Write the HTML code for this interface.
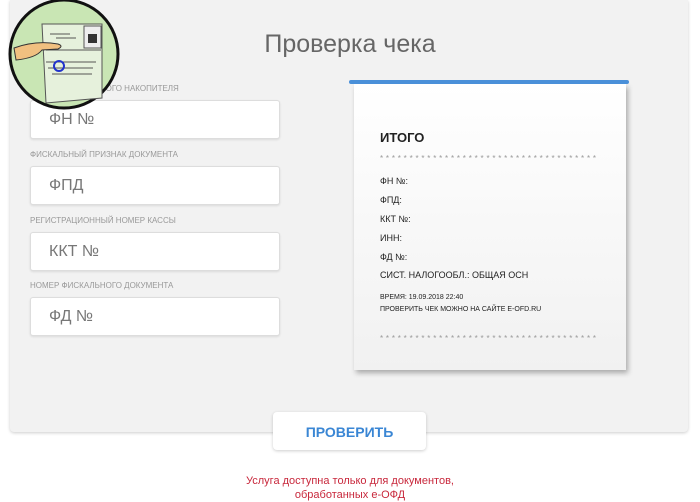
<!DOCTYPE html><html><head><meta charset="utf-8"><style>
body{margin:0;width:700px;height:500px;background:#fff;font-family:"Liberation Sans",sans-serif;position:relative;overflow:hidden}
.panel{position:absolute;left:10px;top:0;width:678px;height:432px;background:#f2f2f2;border-radius:0 0 4px 4px;box-shadow:0 1px 3px rgba(0,0,0,.2)}
h1{position:absolute;left:0;width:700px;top:30px;margin:0;text-align:center;font-weight:normal;font-size:25px;color:#666}
.lab{position:absolute;left:30px;font-size:8px;color:#999}
.inp{position:absolute;left:30px;width:248px;height:37px;background:#fff;border:1px solid #ddd;border-radius:3px;box-shadow:0 1px 2px rgba(0,0,0,.1);font-size:16px;color:#777;line-height:37px;text-indent:18px}
.rc{position:absolute;left:354px;top:84px;width:272px;height:286px;background:linear-gradient(#fff,#f1f1f1);box-shadow:2px 3px 5px rgba(0,0,0,.3)}
.bar{position:absolute;left:349px;top:80px;width:280px;height:4px;background:#4a90d9;border-radius:2px}
.rc div{position:absolute;left:26px;font-size:9px;color:#222}
.st{font-size:8px!important;color:#999!important;letter-spacing:2.8px}
.btn{position:absolute;left:273px;top:412px;width:153px;height:38px;background:#fff;border-radius:4px;box-shadow:0 1px 3px rgba(0,0,0,.2);text-align:center;line-height:40px;color:#3a86d4;font-weight:bold;font-size:14px}
.red{position:absolute;left:0;width:700px;top:474px;text-align:center;color:#c8283c;font-size:11px;line-height:14px}
</style></head><body>
<div class="panel"></div>
<h1>Проверка чека</h1>
<div class="lab" style="top:84px">НОМЕР ФИСКАЛЬНОГО НАКОПИТЕЛЯ</div>
<div class="inp" style="top:100px">ФН №</div>
<div class="lab" style="top:150px">ФИСКАЛЬНЫЙ ПРИЗНАК ДОКУМЕНТА</div>
<div class="inp" style="top:166px">ФПД</div>
<div class="lab" style="top:216px">РЕГИСТРАЦИОННЫЙ НОМЕР КАССЫ</div>
<div class="inp" style="top:232px">ККТ №</div>
<div class="lab" style="top:281px">НОМЕР ФИСКАЛЬНОГО ДОКУМЕНТА</div>
<div class="inp" style="top:297px">ФД №</div>
<div class="rc">
<div style="top:46px;font-size:13px;font-weight:bold">ИТОГО</div>
<div class="st" style="top:70px">*************************************</div>
<div style="top:92px">ФН №:</div>
<div style="top:111px">ФПД:</div>
<div style="top:130px">ККТ №:</div>
<div style="top:149px">ИНН:</div>
<div style="top:168px">ФД №:</div>
<div style="top:186px">СИСТ. НАЛОГООБЛ.: ОБЩАЯ ОСН</div>
<div style="top:210px;font-size:7px">ВРЕМЯ: 19.09.2018 22:40</div>
<div style="top:222px;font-size:7px">ПРОВЕРИТЬ ЧЕК МОЖНО НА САЙТЕ E-OFD.RU</div>
<div class="st" style="top:250px">*************************************</div>
</div>
<div class="bar"></div>
<svg style="position:absolute;left:6px;top:-2px" width="116" height="116" viewBox="0 0 116 116">
<circle cx="58" cy="56" r="54" fill="#c9e6b4" stroke="#111" stroke-width="3"/>
<path d="M36 26 L96 26 L96 100 L40 105 Z" fill="#e6f1dc" stroke="#555"/>
<rect x="78" y="28" width="17" height="22" fill="#eee" stroke="#555"/>
<rect x="82" y="36" width="9" height="9" fill="#333"/>
<path d="M44 36h20M50 40h20M40 52h55M40 64h50M42 70h45M46 76h40" stroke="#555"/>
<circle cx="53" cy="68" r="5" fill="none" stroke="#2233cc" stroke-width="2"/>
<path d="M8 50 Q30 42 52 46 Q58 48 52 51 L36 52 Q30 60 10 62Z" fill="#f0c080" stroke="#333"/>
</svg>
<div class="btn">ПРОВЕРИТЬ</div>
<div class="red">Услуга доступна только для документов,<br>обработанных е-ОФД</div>
</body></html>
